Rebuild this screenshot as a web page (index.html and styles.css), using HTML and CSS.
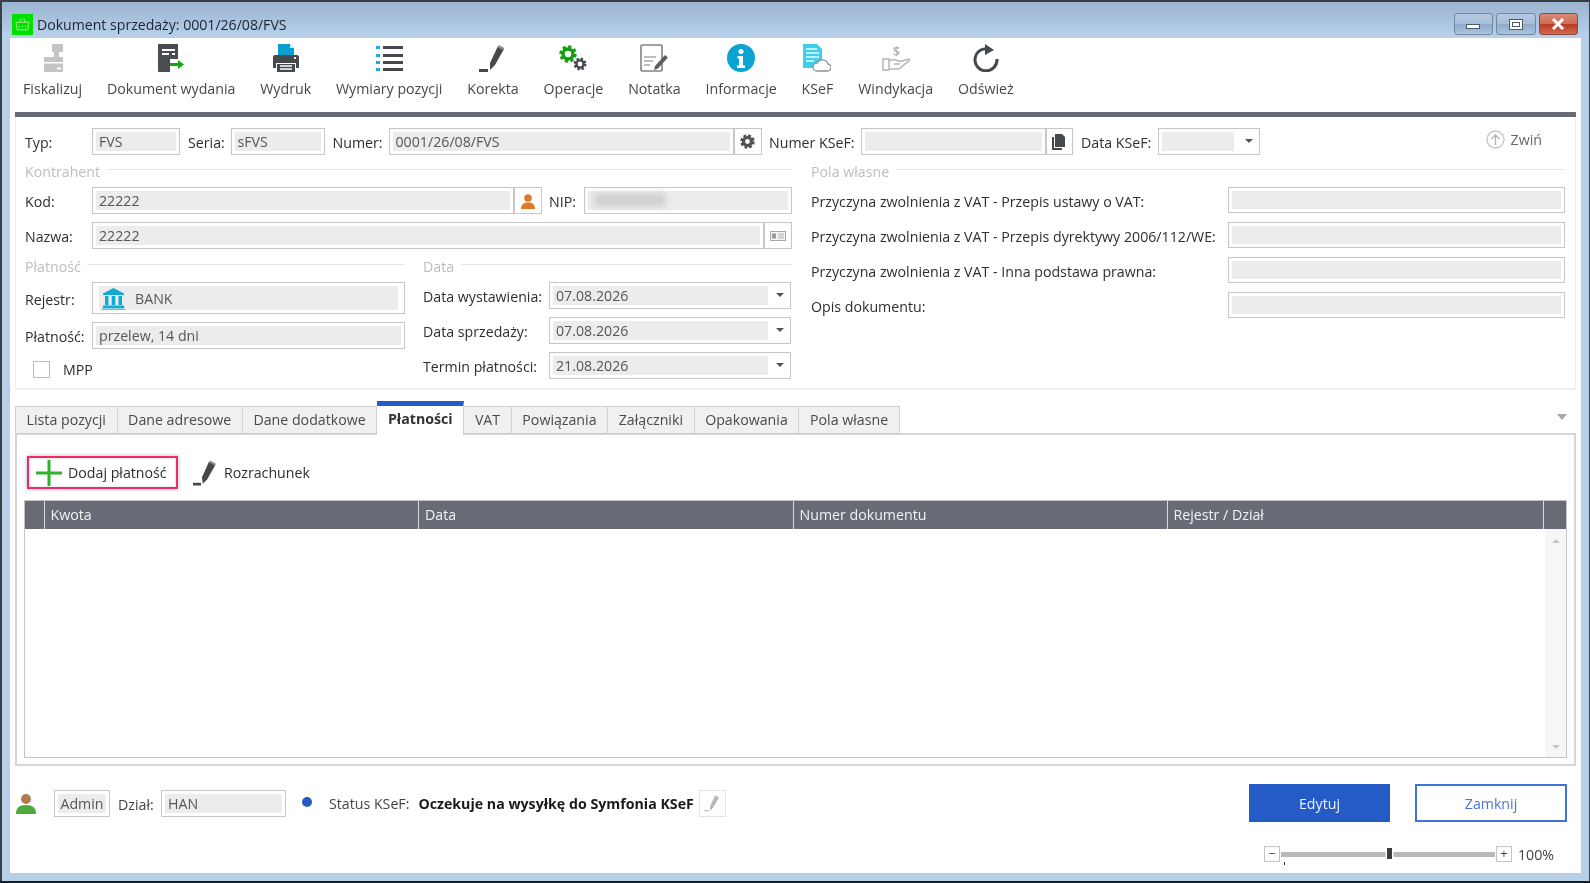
FILE: index.html
```html
<!DOCTYPE html>
<html lang="pl">
<head>
<meta charset="utf-8">
<title>Dokument sprzedaży</title>
<link rel="stylesheet" href="styles.css">
</head>
<body>
<div class="window">
  <header class="titlebar">
    <svg class="appicon" viewBox="0 0 20 20"><rect width="20" height="20" fill="#00e000"/><path d="M4 8h12l-1 7H5zM7 8l2-4M13 8l-2-4" fill="none" stroke="#7de86a" stroke-width="1.2"/><path d="M7 11v2M10 11v2M13 11v2" stroke="#7de86a"/></svg>
    <span class="wintitle">Dokument sprzedaży: 0001/26/08/FVS</span>
    <div class="winbtns">
      <span class="winbtn"><i class="g-min"></i></span>
      <span class="winbtn"><i class="g-max"></i></span>
      <span class="winbtn close"><svg width="14" height="12" viewBox="0 0 14 12"><path d="M2 1l10 10M12 1L2 11" stroke="#fff" stroke-width="3"/></svg></span>
    </div>
  </header>
  <main class="client">
    <nav class="toolbar">
      <div class="tool"><svg viewBox="0 0 28 28"><path d="M13 0h11v8h-4v5h-5V8h-2z M5 13h19v15H5z" fill="#c4c4c4"/><rect x="5" y="18" width="19" height="1.500" fill="#fff"/><rect x="18" y="23.500" width="4" height="1.800" fill="#fff"/></svg><span>Fiskalizuj</span></div>
      <div class="tool"><svg viewBox="0 0 28 28"><path d="M2 0h19v15h-8v13H2a1 1 0 0 1-1-1V1a1 1 0 0 1 1-1z" fill="#4a4c50"/><rect x="5" y="5" width="13" height="2" fill="#fff"/><rect x="5" y="9" width="7" height="2" fill="#fff"/><rect x="15" y="9" width="3" height="2" fill="#fff"/><path d="M21 16v3h-8v3h8v3l6-4.500z" fill="#12a812"/></svg><span>Dokument wydania</span></div>
      <div class="tool"><svg viewBox="0 0 28 28"><path d="M6 0h12l4 4v7H6z" fill="#0a9fd0"/><path d="M18 0l4 4h-4z" fill="#d7eff8"/><path d="M3 11h22a2 2 0 0 1 2 2v11h-3v-5H4v5H1V13a2 2 0 0 1 2-2z" fill="#45484d"/><path d="M5 20h18v8H5z" fill="#45484d"/><path d="M8 22h12M8 25h12" stroke="#fff" stroke-width="1.300"/><rect x="22" y="13" width="2" height="2" fill="#fff"/></svg><span>Wydruk</span></div>
      <div class="tool"><svg viewBox="0 0 28 28"><path d="M1 2h4v3H1zM1 10h4v3H1zM1 17h4v3H1zM1 24h4v3H1z" fill="#18aede"/><path d="M8 2h20v3H8zM8 10h20v3H8zM8 17h20v3H8zM8 24h20v3H8z" fill="#45484d"/></svg><span>Wymiary pozycji</span></div>
      <div class="tool"><svg viewBox="0 0 28 28"><path d="M19 2l6 3-9 16-5 5 0-7z" fill="#45484d"/><path d="M19.800 1l5.500 3-1.200 2.200-5.500-3z" fill="#8a8c90"/><rect x="0" y="25" width="9" height="3" fill="#45484d"/></svg><span>Korekta</span></div>
      <div class="tool"><svg viewBox="0 0 28 28"><circle cx="9" cy="10" r="7" fill="none" stroke="#0ea00e" stroke-width="3.500" stroke-dasharray="3 2.500"/><circle cx="9" cy="10" r="5" fill="none" stroke="#0ea00e" stroke-width="3.400"/><circle cx="21" cy="20" r="5.200" fill="none" stroke="#45484d" stroke-width="2.500" stroke-dasharray="2.300 1.800"/><circle cx="21" cy="20" r="3.600" fill="none" stroke="#45484d" stroke-width="2.400"/></svg><span>Operacje</span></div>
      <div class="tool"><svg viewBox="0 0 28 28"><rect x="1" y="1" width="21" height="26" rx="1" fill="#fff" stroke="#808285" stroke-width="1.600"/><path d="M4 13h12M4 17h9M4 21h6" stroke="#a4a6a8" stroke-width="1.300"/><path d="M25 11l3 2.500-10 11-4 1.500 1-4z" fill="#5b5e62"/></svg><span>Notatka</span></div>
      <div class="tool"><svg viewBox="0 0 28 28"><circle cx="14" cy="14" r="14" fill="#0aa3d2"/><circle cx="14" cy="7.500" r="2.500" fill="#fff"/><path d="M10.500 12h5.500v9.500h2V24h-8v-2.500h2v-7h-1.500z" fill="#fff"/></svg><span>Informacje</span></div>
      <div class="tool"><svg viewBox="0 0 28 28"><path d="M0 0h14l5 5v19H0z" fill="#3dd0ec"/><path d="M3 5h11M3 9h13M3 13h13M3 17h8" stroke="#eafaff" stroke-width="1.300"/><path d="M14 27a4 4 0 0 1 0-8 6 6 0 0 1 11 1 3.500 3.500 0 0 1-1 7z" fill="#fff" stroke="#8f9195" stroke-width="1.300"/></svg><span>KSeF</span></div>
      <div class="tool"><svg viewBox="0 0 28 28"><text class="dollar" x="11" y="12">$</text><path d="M1 15h6v11H1zM7 17c4-2 6-2 9 0h4l7-2c1 1 0 2-1 2.500L17 25H7" fill="none" stroke="#b4b5b7" stroke-width="1.500"/><path d="M12 20h6" stroke="#b4b5b7" stroke-width="1.500"/></svg><span>Windykacja</span></div>
      <div class="tool"><svg viewBox="0 0 28 28"><path d="M18 5.500A11 11 0 1 0 25 15" fill="none" stroke="#45484d" stroke-width="3"/><path d="M13 0l9 6-9 5z" fill="#45484d"/></svg><span>Odśwież</span></div>
    </nav>

    <section class="formpanel">
      <div class="row1">
        <label class="lbl w-kod">Typ:</label>
        <div class="fld w-typ"><span>FVS</span></div>
        <label class="lbl w-seria">Seria:</label>
        <div class="fld w-ser"><span>sFVS</span></div>
        <label class="lbl w-numer">Numer:</label>
        <div class="fld w-num"><span>0001/26/08/FVS</span></div>
        <button class="sq w-sq"><svg width="17" height="17" viewBox="0 0 17 17"><circle cx="8.500" cy="8.500" r="6" fill="none" stroke="#505256" stroke-width="2.500" stroke-dasharray="2.800 1.900"/><circle cx="8.500" cy="8.500" r="4" fill="none" stroke="#505256" stroke-width="3.200"/></svg></button>
        <label class="lbl w-nk">Numer KSeF:</label>
        <div class="fld w-nkf"><span></span></div>
        <button class="sq w-sq2"><svg width="14" height="16" viewBox="0 0 14 16"><path d="M0 3h2v11h8v2H0z" fill="#45484d"/><path d="M3 0h7l3 3v10H3z" fill="#45484d"/></svg></button>
        <label class="lbl w-dk">Data KSeF:</label>
        <div class="fld combo w-dkf"><span></span><i class="arrow"></i></div>
        <div class="zwin"><svg width="19" height="19" viewBox="0 0 19 19"><circle cx="9.500" cy="9.500" r="8.500" fill="none" stroke="#c4c4c4" stroke-width="1.300"/><path d="M9.500 15V5M5.500 9l4-4 4 4" fill="none" stroke="#b4b4b4" stroke-width="1.300"/></svg><span>Zwiń</span></div>
      </div>
      <div class="columns">
        <div class="leftcol">
          <div class="section"><span>Kontrahent</span></div>
          <div class="row">
            <label class="lbl w-kod">Kod:</label>
            <div class="fld w-kodf"><span>22222</span></div>
            <button class="sq w-sq"><svg width="16" height="16" viewBox="0 0 16 16"><circle cx="8" cy="5" r="3.800" fill="#e07a28"/><path d="M1 16c0-5 3-6.500 7-6.500s7 1.500 7 6.500z" fill="#e07a28"/></svg></button>
            <label class="lbl w-nip">NIP:</label>
            <div class="fld w-nipf"><span><i class="blurred"></i></span></div>
          </div>
          <div class="row">
            <label class="lbl w-kod">Nazwa:</label>
            <div class="fld w-nazf"><span>22222</span></div>
            <button class="sq w-sq"><svg width="16" height="10" viewBox="0 0 16 10"><rect x=".5" y=".5" width="15" height="9" fill="#f4f4f4" stroke="#a8a8a8"/><rect x="2" y="2.500" width="4" height="5" fill="#9a9a9a"/><path d="M8 3h6M8 5h6M8 7h6" stroke="#b0b0b0"/></svg></button>
          </div>
          <div class="subcols">
            <div class="subleft">
              <div class="section"><span>Płatność</span></div>
              <div class="row">
                <label class="lbl w-kod">Rejestr:</label>
                <div class="fld tall w-plat"><span class="bank"><svg width="23" height="22" viewBox="0 0 23 22"><path d="M11.500 0L22 5.500V7H1V5.500z" fill="#12a8d4"/><path d="M3 8h3.500v9H3zM9.700 8h3.600v9H9.700zM16.500 8H20v9h-3.500zM1 17.500h21V20H1z" fill="#12a8d4"/><rect y="20.500" width="23" height="1.500" fill="#4dc3e4"/></svg><b>BANK</b></span></div>
              </div>
              <div class="row">
                <label class="lbl w-kod">Płatność:</label>
                <div class="fld w-plat"><span>przelew, 14 dni</span></div>
              </div>
              <div class="mpp"><i class="check"></i><span>MPP</span></div>
            </div>
            <div class="subright">
              <div class="section"><span>Data</span></div>
              <div class="row">
                <label class="lbl w-data">Data wystawienia:</label>
                <div class="fld combo w-dat"><span>07.08.2026</span><i class="arrow"></i></div>
              </div>
              <div class="row">
                <label class="lbl w-data">Data sprzedaży:</label>
                <div class="fld combo w-dat"><span>07.08.2026</span><i class="arrow"></i></div>
              </div>
              <div class="row">
                <label class="lbl w-data">Termin płatności:</label>
                <div class="fld combo w-dat"><span>21.08.2026</span><i class="arrow"></i></div>
              </div>
            </div>
          </div>
        </div>
        <div class="rightcol">
          <div class="section"><span>Pola własne</span></div>
          <div class="rrows">
            <div class="rrow"><label class="lbl w-rl">Przyczyna zwolnienia z VAT - Przepis ustawy o VAT:</label><div class="fld w-rf"><span></span></div></div>
            <div class="rrow"><label class="lbl w-rl">Przyczyna zwolnienia z VAT - Przepis dyrektywy 2006/112/WE:</label><div class="fld w-rf"><span></span></div></div>
            <div class="rrow"><label class="lbl w-rl">Przyczyna zwolnienia z VAT - Inna podstawa prawna:</label><div class="fld w-rf"><span></span></div></div>
            <div class="rrow"><label class="lbl w-rl">Opis dokumentu:</label><div class="fld w-rf"><span></span></div></div>
          </div>
        </div>
      </div>
    </section>

    <div class="tabs">
      <span class="tab">Lista pozycji</span>
      <span class="tab">Dane adresowe</span>
      <span class="tab">Dane dodatkowe</span>
      <span class="tab active">Płatności</span>
      <span class="tab">VAT</span>
      <span class="tab">Powiązania</span>
      <span class="tab">Załączniki</span>
      <span class="tab">Opakowania</span>
      <span class="tab">Pola własne</span>
      <i class="collapse"></i>
    </div>
    <section class="tabbody">
      <div class="actions">
        <button class="addpay"><svg width="26" height="26" viewBox="0 0 26 26"><path d="M11.500 0h3v11.500H26v3H14.500V26h-3V14.500H0v-3h11.500z" fill="#2fb32f"/></svg><span>Dodaj płatność</span></button>
        <button class="settle"><svg width="25" height="26" viewBox="0 0 28 28"><path d="M18 1l7 4-9 16-5 5-1-7z" fill="#45484d"/><path d="M19.300 0l6.500 3.500-1.200 2.200-6.500-3.500z" fill="#8a8c90"/><rect x="0" y="25" width="9" height="3" fill="#45484d"/></svg><span>Rozrachunek</span></button>
      </div>
      <div class="grid">
        <div class="ghead">
          <span class="c0"></span>
          <span class="c1">Kwota</span>
          <span class="c2">Data</span>
          <span class="c3">Numer dokumentu</span>
          <span class="c4">Rejestr / Dział</span>
          <span class="c5"></span>
        </div>
        <div class="gbody">
          <div class="scroll"><i class="up"></i><i class="down"></i></div>
        </div>
      </div>
    </section>

    <footer class="status">
      <svg class="user" width="22" height="21" viewBox="0 0 22 21"><circle cx="11" cy="6" r="5" fill="#b07a50"/><path d="M1 21c0-6 3-9 10-9s10 3 10 9z" fill="#4fa83a"/></svg>
      <div class="fld adm"><span>Admin</span></div>
      <label class="lbl lab-dz">Dział:</label>
      <div class="fld hanf"><span>HAN</span></div>
      <i class="dot"></i>
      <span class="st-l">Status KSeF:</span>
      <strong class="st-v">Oczekuje na wysyłkę do Symfonia KSeF</strong>
      <button class="pen"><svg width="18" height="18" viewBox="0 0 28 28"><path d="M19 2l6 3-9 16-5 5 0-7z" fill="#b8b8b8"/><rect x="2" y="25" width="8" height="2" fill="#c8c8c8"/></svg></button>
      <button class="btn primary">Edytuj</button>
      <button class="btn outline">Zamknij</button>
    </footer>
    <div class="zoombar">
      <span class="zbtn">−</span>
      <div class="track"><i class="thumb"></i><i class="tick"></i></div>
      <span class="zbtn">+</span>
      <span class="zval">100%</span>
    </div>
  </main>
</div>
</body>
</html>
```
FILE: styles.css
```css
* { box-sizing: border-box; }
html, body { margin: 0; height: 883px; overflow: hidden; background: #1c1c1c; }
body { font-family: "Open Sans", "Noto Sans", sans-serif; font-size: 14.2px; color: #2e2e2e; }
button { font: inherit; color: inherit; background: #fff; padding: 0; cursor: default; }
i { display: block; }

.window { height: 881px; border: solid #3a3f46; border-width: 2px 1px 0 2px; background: #b7d0ea; display: flex; flex-direction: column; filter: blur(.4px); }
.titlebar { height: 36px; flex: none; display: flex; align-items: center; padding: 8px 11px 0 10px; background: linear-gradient(#9ab3cf, #b8d2ec); }
.appicon { width: 21px; height: 21px; margin-right: 4px; }
.wintitle { font-size: 14.1px; color: #1d2430; }
.winbtns { margin-left: auto; display: flex; gap: 3px; }
.winbtn { width: 39.500px; height: 22px; border: 1px solid #75879c; border-radius: 3px; background: linear-gradient(#b5cbe2 0, #a6bfd9 50%, #8fabc8 52%, #aac4de 100%); display: flex; align-items: center; justify-content: center; }
.winbtn.close { background: linear-gradient(#d98a78 0, #cf6a52 50%, #b83d24 52%, #d2694f 100%); border-color: #8a4a45; }
.g-min { width: 14px; height: 5px; background: #fff; border: 1px solid #4a5a6c; margin-top: 5px; }
.g-max { width: 14px; height: 11px; background: #fff; border: 1px solid #4a5a6c; box-shadow: inset 0 0 0 2px #fff, inset 0 0 0 3px #4a5a6c; }

.client { margin: 0 8px 8px; flex: 1; background: #fff; padding: 0 5px; display: flex; flex-direction: column; min-height: 0; }

.toolbar { flex: none; display: flex; gap: 24.900px; padding: 6px 0 0 8px; border-bottom: 5px solid #686b76; height: 79px; }
.tool { display: flex; flex-direction: column; align-items: center; color: #45474b; }
.tool svg { width: 28px; height: 28px; }
.tool span { margin-top: 8px; line-height: 18px; white-space: nowrap; }
.dollar { font: 700 12px "Open Sans", sans-serif; fill: #b4b5b7; }

.formpanel { height: 273px; flex: none; padding: 11px 10px 0 9px; border: solid #eeeeee; border-width: 0 1px 2px; }
.row1, .row, .rrow { display: flex; align-items: center; }
.lbl { flex: none; white-space: nowrap; padding-top: 2px; }
.fld { flex: none; height: 27px; border: 1px solid #c6c6c6; padding: 3px; background: #fff; display: flex; }
.fld > span { flex: 1; background: #ebeced; color: #565656; padding: 1px 0 0 3px; line-height: 18px; white-space: nowrap; min-width: 0; }
.sq { flex: none; height: 27px; border: 1px solid #c6c6c6; display: flex; align-items: center; justify-content: center; }
.w-kod { width: 67px; }
.w-typ { width: 88px; }
.w-seria { width: 42.500px; margin-left: 8px; }
.w-ser { width: 94px; }
.w-numer { width: 56px; margin-left: 8px; }
.w-num { width: 345px; }
.w-sq { width: 28px; }
.w-nk { width: 92px; margin-left: 7.500px; }
.w-nkf { width: 184.500px; }
.w-sq2 { width: 27.500px; }
.w-dk { width: 77.200px; margin-left: 8px; }
.w-dkf { width: 102px; }
.combo { position: relative; }
.combo > span { margin-right: 17px; }
.w-dkf > span { margin-right: 22px; }
.arrow { width: 0; height: 0; border: 4px solid transparent; border-top: 4px solid #555; border-bottom: 0; position: absolute; right: 6px; top: 10px; }
.zwin { margin-left: auto; margin-right: 23px; display: flex; align-items: center; gap: 6px; color: #666; margin-top: -5px; }
.zwin svg { flex: none; }

.columns { display: flex; gap: 19px; margin-top: 7px; }
.leftcol { width: 767px; flex: none; }
.rightcol { flex: 1; min-width: 0; }
.section { height: 18px; margin-bottom: 7px; display: flex; align-items: center; gap: 7px; color: #bdbdbd; }
.section::after { content: ""; flex: 1; height: 1px; background: #e6e6e6; margin-top: -3px; }
.row + .row { margin-top: 8px; }
.w-kodf { width: 422px; }
.w-nip { width: 35px; margin-left: 7px; }
.w-nipf { width: 208px; }
.blurred { width: 71px; height: 14px; background: #cfd0d2; filter: blur(3px); margin: 1px 0 0 3px; }
.w-nazf { width: 672px; }
.subcols { display: flex; gap: 18px; margin-top: 8px; }
.subleft { width: 380px; flex: none; }
.subright { flex: 1; min-width: 0; }
.w-plat { width: 313px; }
.tall { height: 32px; }
.tall > span { margin: 0 3px; }
.bank { display: flex; align-items: center; gap: 10px; padding-left: 7px; }
.bank svg { flex: none; }
.bank b { font-weight: 400; }
.mpp { display: flex; align-items: center; gap: 13px; margin: 11px 0 0 8px; }
.check { width: 17px; height: 17px; border: 1px solid #bcbcbc; }
.w-data { width: 126px; }
.w-dat { width: 242px; }
.w-dat > span { margin-right: 19px; }

.rrows { margin-top: 1px; display: flex; flex-direction: column; gap: 9px; }
.rrow { height: 26px; }
.rrow .fld { height: 26px; }
.w-rl { width: 417px; }
.w-rf { width: 337px; }

.tabs { flex: none; height: 27px; margin-top: 16px; display: flex; position: relative; z-index: 1; }
.tab { flex: none; height: 28px; padding: 0 10.600px; line-height: 26px; background: #f0f0f0; border: 1px solid #d0d0d0; border-left-width: 0; color: #4a4a4a; white-space: nowrap; }
.tab:first-child { border-left-width: 1px; }
.tab.active { background: #fff; border-top: 5px solid #245bc6; margin-top: -5px; height: 34px; border-bottom: 0; font-weight: 700; color: #333; }
.collapse { margin: 8px 9px 0 auto; width: 0; height: 0; border: 5.500px solid transparent; border-top: 6px solid #a8a8a8; border-bottom: 0; }

.tabbody { flex: none; height: 333px; border: 2px solid #d6d6d6; padding: 20px 7px 0; }
.actions { display: flex; gap: 15px; height: 34px; padding: 1px 0 0 3px; }
.addpay { display: flex; align-items: center; gap: 6px; width: 151px; height: 33px; border: 2.500px solid #f02a6a; box-shadow: 0 0 4px rgba(0,0,0,.3), inset 0 0 3px rgba(0,0,0,.18); padding-left: 7px; white-space: nowrap; }
.settle { display: flex; align-items: center; gap: 6px; border: 0; white-space: nowrap; }
.grid { margin-top: 11px; height: 258px; border: 1px solid #c4c4c4; display: flex; flex-direction: column; }
.ghead { height: 28px; flex: none; background: #686b76; color: #f2f2f2; display: flex; }
.ghead span { flex: none; line-height: 28px; padding-left: 5.500px; border-right: 1.500px solid #d8d8d8; white-space: nowrap; }
.ghead .c0 { width: 20px; }
.ghead .c1 { width: 374px; }
.ghead .c2 { width: 375px; padding-left: 6px; }
.ghead .c3 { width: 374px; }
.ghead .c4 { width: 376px; }
.ghead .c5 { flex: 1; border: 0; }
.gbody { flex: 1; display: flex; justify-content: flex-end; }
.scroll { width: 21px; background: #f6f6f6; display: flex; flex-direction: column; justify-content: space-between; align-items: center; padding: 10px 0 8px; }
.up { width: 0; height: 0; border: 4px solid transparent; border-bottom: 4px solid #c4c4c4; border-top: 0; }
.down { width: 0; height: 0; border: 4px solid transparent; border-top: 4px solid #c4c4c4; border-bottom: 0; }

.status { flex: none; height: 38px; margin-top: 18px; display: flex; align-items: center; }
.user { flex: none; margin: 0 17px 0 0; }
.adm { width: 56px; }
.adm > span { text-align: center; padding: 1px 0 0; }
.lab-dz { margin-left: 8px; width: 43px; color: #444; }
.hanf { width: 125px; }
.dot { width: 10px; height: 10px; border-radius: 50%; background: #245bc6; margin: -2px 0 0 16px; flex: none; }
.st-l { margin-left: 17px; color: #444; white-space: nowrap; }
.st-v { margin-left: 9px; color: #1a1a1a; white-space: nowrap; }
.pen { width: 27px; height: 27px; border: 1px solid #e4e4e4; margin-left: 5px; display: flex; align-items: center; justify-content: center; }
.btn { flex: none; height: 38px; border: 1px solid #245bc6; }
.primary { width: 141px; margin-left: auto; background: #245bc6; color: #eef3ff; }
.outline { width: 152px; margin: 0 9px 0 25px; border: 2px solid #3f73d8; color: #4a72d8; }

.zoombar { flex: none; height: 16px; margin-top: 24px; display: flex; align-items: center; justify-content: flex-end; padding-right: 22px; }
.zbtn { width: 16px; height: 16px; border: 1px solid #c4c4c4; line-height: 13px; text-align: center; font-size: 13px; color: #444; }
.track { position: relative; width: 214px; height: 5px; background: #b8b8b8; margin: 0 1px; }
.thumb { position: absolute; left: 106px; top: -4px; width: 5px; height: 11px; background: #3c3c3c; box-shadow: 0 0 0 1.500px #fff; }
.tick { position: absolute; left: 3px; top: 10px; width: 1px; height: 3px; background: #333; }
.zval { margin-left: 6px; width: 36px; color: #444; }
```
